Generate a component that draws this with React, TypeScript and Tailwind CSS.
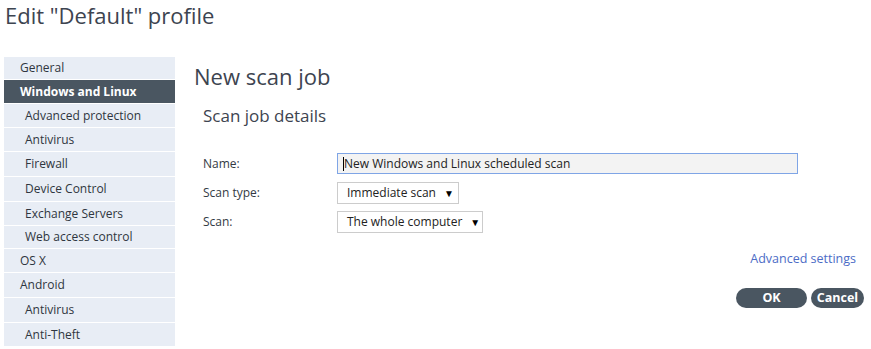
import React from "react";

const rows: { label: string; h: number; indent: boolean; active?: boolean }[] = [
  { label: "General", h: 23, indent: false },
  { label: "Windows and Linux", h: 24, indent: false, active: true },
  { label: "Advanced protection", h: 24, indent: true },
  { label: "Antivirus", h: 24, indent: true },
  { label: "Firewall", h: 25, indent: true },
  { label: "Device Control", h: 25, indent: true },
  { label: "Exchange Servers", h: 24, indent: true },
  { label: "Web access control", h: 23, indent: true },
  { label: "OS X", h: 24, indent: false },
  { label: "Android", h: 25, indent: false },
  { label: "Antivirus", h: 25, indent: true },
  { label: "Anti-Theft", h: 24, indent: true },
];

const font = { fontFamily: "'Open Sans', 'Noto Sans', sans-serif" };

export default function App() {
  return (
    <div className="w-[871px] h-[349px] bg-white overflow-hidden text-[#333a44]" style={font}>
      <div className="pl-[5px] h-[57px] text-[22px] leading-[30px] text-[#3d4450]">Edit "Default" profile</div>
      <div className="flex">
        <div className="ml-[4px] w-[171px] flex flex-col">
          {rows.map((r, i) => (
            <div
              key={i}
              style={{ height: r.h }}
              className={`flex items-center border-b border-white text-[12px] ${r.indent ? "pl-[21px]" : "pl-[16px]"} ${r.active ? "bg-[#4a5661] text-white font-bold" : "bg-[#e8edf5] text-[#2f3640]"}`}
            >
              {r.label}
            </div>
          ))}
        </div>
        <div className="flex-1 pl-[19px]">
          <div className="text-[22px] leading-[26px] mt-[6px] text-[#3d4450]">New scan job</div>
          <div className="pl-[9px] mt-[16px] text-[17px] leading-[22px] text-[#3d4450]">Scan job details</div>
          <div className="pl-[9px] mt-[26px] flex flex-col text-[12px]">
            <div className="flex items-center h-[21px]">
              <div className="w-[134px]">Name:</div>
              <div className="w-[461px] h-[21px] border border-[#7fa5e6] bg-[#f3f3f3] flex items-center pl-[5px] text-[#222]">
                <span className="inline-block w-px h-[14px] bg-black"></span>New Windows and Linux scheduled scan
              </div>
            </div>
            <div className="flex items-center h-[22px] mt-[8px]">
              <div className="w-[134px]">Scan type:</div>
              <div className="h-[22px] w-[122px] border border-[#cccccc] bg-white flex items-center pl-[9px] text-[#222]">
                Immediate scan<span className="ml-[8px] text-[10px] text-black">▼</span>
              </div>
            </div>
            <div className="flex items-center h-[22px] mt-[7px]">
              <div className="w-[134px]">Scan:</div>
              <div className="h-[22px] w-[146px] border border-[#cccccc] bg-white flex items-center pl-[9px] text-[#222]">
                The whole computer<span className="ml-[8px] text-[10px] text-black">▼</span>
              </div>
            </div>
          </div>
          <div className="flex justify-end pr-[15px] mt-[18px] text-[12.5px] leading-[16px] text-[#4c6cc6]">Advanced settings</div>
          <div className="flex justify-end gap-[4px] pr-[7px] mt-[21px]">
            <button className="w-[71px] h-[20px] rounded-full bg-[#4a5661] text-white text-[12.5px] font-bold leading-[20px]">OK</button>
            <button className="w-[53px] h-[20px] rounded-full bg-[#4a5661] text-white text-[12.5px] font-bold leading-[20px]">Cancel</button>
          </div>
        </div>
      </div>
    </div>
  );
}
